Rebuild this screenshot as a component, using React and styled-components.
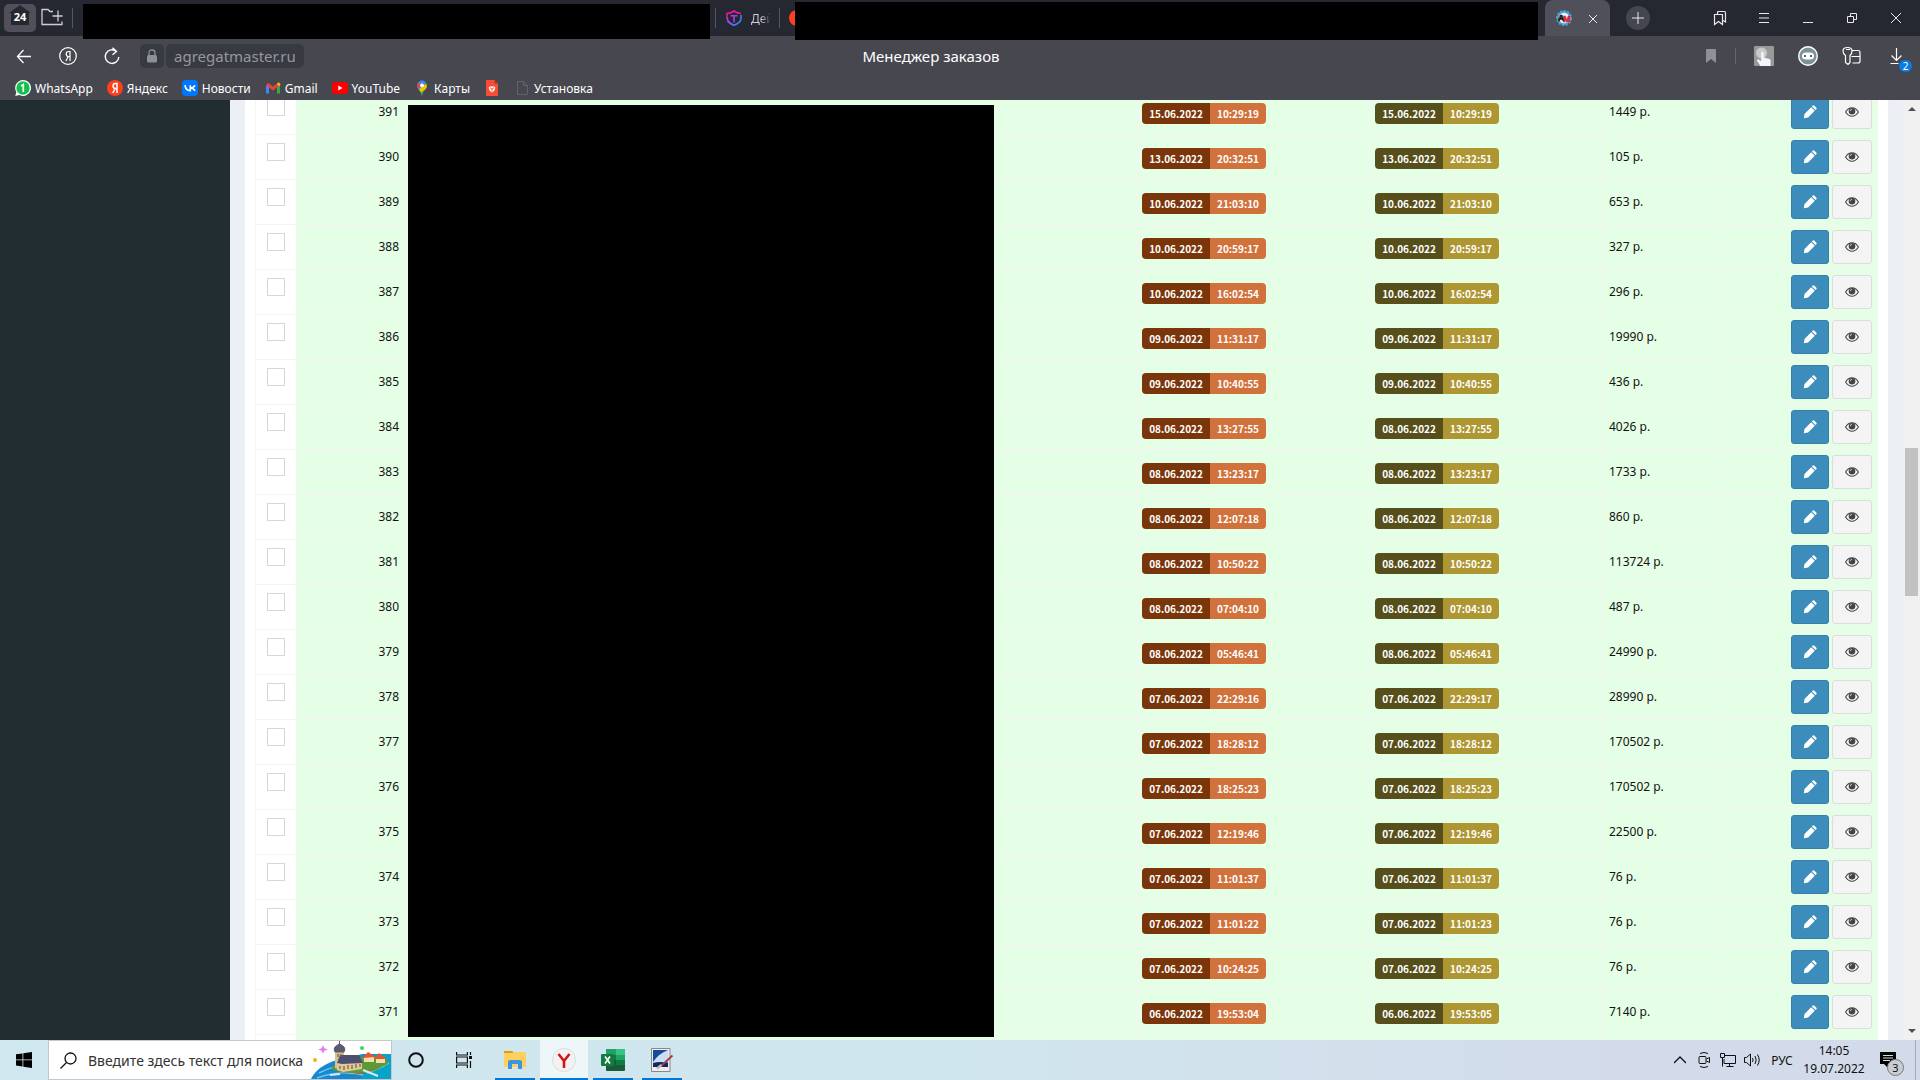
import React from 'react';
import styled, { createGlobalStyle } from 'styled-components';

const GlobalStyle = createGlobalStyle`
    * {
        box-sizing: border-box;
    }
    body {
        margin: 0;
        overflow: hidden;
        font-family: 'Noto Sans', sans-serif;
    }
    button {
        font: inherit;
        color: inherit;
        padding: 0;
        border: 0;
        background: none;
    }
`;

const Screen = styled.div`
    display: flex;
    flex-direction: column;
    height: 100vh;
`;

// browser: tab strip
const TabStrip = styled.div`
    display: flex;
    align-items: center;
    height: 36px;
    background: #252831;
    color: #e8e8ea;
`;

const HomeTab = styled.button`
    width: 32px;
    height: 28px;
    margin-left: 4px;
    border-radius: 5px;
    background: #50505a;
`;

const NewGroup = styled.button`
    width: 22px;
    height: 20px;
    margin: 0 9px 0 5px;
`;

const TabDivider = styled.span`
    flex: none;
    width: 1px;
    height: 20px;
    margin-right: ${({ $mr }) => $mr || 0}px;
    background: #555861;
`;

const Redacted = styled.div`
    position: relative;
    z-index: 1;
    align-self: flex-start;
    flex: ${({ $grow }) => $grow} 1 0;
    height: ${({ $h }) => $h}px;
    margin-top: ${({ $top }) => $top}px;
    background: #000;
`;

const MiniTabs = styled.div`
    display: flex;
    flex: none;
    align-items: center;
    width: 85px;
    padding-left: 5px;
    overflow: hidden;
`;

const MiniTab = styled.button`
    display: flex;
    flex: none;
    align-items: center;
    gap: 9px;
    width: 63px;
    padding-left: 10px;
    text-align: left;
    font-size: 12px;

    svg {
        flex: none;
    }
`;

const FadeText = styled.span`
    white-space: nowrap;
    color: transparent;
    background: linear-gradient(90deg, #d0d0d4 10px, #252831 20px);
    background-clip: text;
`;

const RedTab = styled.span`
    flex: none;
    width: 16px;
    height: 16px;
    margin-left: 9px;
    border-radius: 8px;
    background: #fc3f1d;
`;

const WindowSide = styled.div`
    display: flex;
    flex: none;
    align-items: center;
    width: 382px;
    height: 36px;
    padding-left: 7px;
`;

const ActiveTab = styled.div`
    display: flex;
    flex: none;
    align-items: center;
    gap: 16px;
    width: 65px;
    height: 36px;
    padding-left: 11px;
    border-radius: 8px 8px 0 0;
    background: #50505a;
`;

const PlusButton = styled.button`
    display: grid;
    flex: none;
    place-items: center;
    width: 24px;
    height: 24px;
    margin: 0 48px 0 16px;
    border-radius: 50%;
    background: #444650;
`;

const WindowButton = styled.button`
    display: grid;
    flex: none;
    place-items: center;
    width: 44px;
    height: 36px;
`;

// browser: address row
const AddressBar = styled.div`
    display: grid;
    grid-template-columns: 1fr auto 1fr 58px;
    align-items: center;
    height: 40px;
    background: #474750;
    color: #fff;
`;

const AddressLeft = styled.div`
    display: flex;
    align-items: center;
    padding-left: 12px;
`;

const NavButton = styled.button`
    display: grid;
    place-items: center;
    width: 24px;
    height: 24px;
    margin-right: 20px;
`;

const LockBox = styled.button`
    display: grid;
    place-items: center;
    width: 24px;
    height: 24px;
    margin: 0 2px 0 -4px;
    border-radius: 5px;
    background: #383a42;
`;

const Url = styled.button`
    height: 24px;
    padding: 0 8px;
    border-radius: 5px;
    background: #383a42;
    color: #96979c;
    font-size: 15px;
    line-height: 24px;
`;

const PageTitle = styled.div`
    font-size: 15px;
`;

const AddressRight = styled.div`
    display: flex;
    align-items: center;
    justify-content: flex-end;
`;

const ToolDivider = styled.span`
    width: 1px;
    height: 16px;
    margin-left: 14px;
    background: #666870;
`;

const ToolButton = styled.button`
    position: relative;
    display: grid;
    place-items: center;
    width: 20px;
    height: 24px;
    margin-left: ${({ $ml }) => $ml || 0}px;
`;

const Badge = styled.span`
    position: absolute;
    right: -6px;
    bottom: -4px;
    width: 13px;
    height: 12px;
    border-radius: 6px;
    background: #0a7be0;
    color: #fff;
    font-size: 10px;
    line-height: 12px;
    text-align: center;
`;

const Bookmarks = styled.nav`
    display: flex;
    align-items: center;
    gap: 14px;
    height: 24px;
    padding-left: 15px;
    background: #474750;
`;

const Bookmark = styled.a`
    display: flex;
    align-items: center;
    gap: 4px;
    color: #fff;
    font-size: 12px;
    text-decoration: none;
    white-space: nowrap;

    svg {
        flex: none;
    }
`;

// page
const Page = styled.div`
    flex: 1;
    display: flex;
    min-height: 0;
    background: #ecf0f5;
`;

const Sidebar = styled.aside`
    width: 230px;
    background: #222d32;
`;

const Content = styled.main`
    flex: 1;
    min-width: 0;
    padding: 0 15px;
    overflow: hidden;
`;

const Box = styled.div`
    height: 100%;
    padding: 0 10px;
    overflow: hidden;
    background: #fff;
`;

const TableWrap = styled.div`
    position: relative;
    margin-top: -11px;
`;

const Orders = styled.table`
    width: 100%;
    table-layout: fixed;
    border-collapse: collapse;
    font-size: 12px;
    line-height: 16px;
    color: #111;
`;

const Row = styled.tr`
    height: 45px;
`;

const Cell = styled.td`
    height: 45px;
    padding: 0 5px;
    border: 1px solid #f4f4f4;
    background: ${({ $plain }) => ($plain ? '#fff' : '#e5ffe6')};
    text-align: ${({ $align }) => $align || 'left'};
    vertical-align: middle;
`;

const Check = styled.input`
    display: block;
    appearance: none;
    width: 18px;
    height: 18px;
    margin: 0 0 10px 6px;
    border: 1px solid #d2d6de;
    background: #fff;
`;

const Stamp = styled.span`
    display: inline-flex;
    margin-top: 2px;
    border-radius: 4px;
    overflow: hidden;
    color: #fff;
    font-family: 'Noto Sans CJK SC', 'Noto Sans', sans-serif;
    font-size: 10px;
    font-weight: 700;
    line-height: 21px;
    vertical-align: middle;
`;

const StampDate = styled.span`
    width: 68px;
    text-align: center;
    background: ${({ $color }) => $color};
`;

const StampTime = styled.span`
    width: 56px;
    text-align: center;
    background: ${({ $color }) => $color};
`;

const Actions = styled.div`
    display: flex;
    justify-content: flex-end;
    gap: 3px;
`;

const ActionButton = styled.button`
    display: grid;
    place-items: center;
    width: ${({ $primary }) => ($primary ? 38 : 40)}px;
    height: 34px;
    border: 1px solid ${({ $primary }) => ($primary ? '#367fa9' : '#ddd')};
    border-radius: 3px;
    background: ${({ $primary }) => ($primary ? '#3c8dbc' : '#f4f4f4')};
`;

const TableCover = styled.div`
    position: absolute;
    top: 16px;
    bottom: 43px;
    left: 153px;
    right: 884px;
    background: #000;
`;

const Scrollbar = styled.div`
    display: flex;
    flex-direction: column;
    align-items: center;
    width: 17px;
    padding: 6px 0;
    background: #f0f0f0;
`;

const Thumb = styled.div`
    width: 13px;
    height: 148px;
    background: #c1c1c1;
`;

const Gap = styled.div`
    flex: ${({ $grow }) => $grow};
`;

// windows taskbar
const Taskbar = styled.footer`
    display: flex;
    height: 40px;
    background: linear-gradient(90deg, #cfe7ee, #d0e6ee 50%, #d3dbea 85%);
    color: #111;
`;

const StartButton = styled.button`
    display: grid;
    place-items: center;
    width: 48px;
`;

const Search = styled.label`
    display: flex;
    align-items: center;
    width: 344px;
    border: 1px solid #c4c8ca;
    background: #fff;
`;

const SearchIcon = styled.svg`
    flex: none;
    margin: 0 11px;
`;

const SearchInput = styled.input`
    flex: 1;
    min-width: 0;
    height: 36px;
    padding: 0;
    border: 0;
    outline: 0;
    background: none;
    font-family: 'Noto Sans', sans-serif;
    font-size: 14px;

    &::placeholder {
        color: #333;
        opacity: 1;
    }
`;

const TaskButton = styled.button`
    display: grid;
    place-items: center;
    width: 48px;
    height: 40px;
    background: ${({ $active }) => ($active ? '#edf6f9' : 'none')};
`;

const AppButton = styled(TaskButton)`
    width: ${({ $active }) => ($active ? 48 : 40)}px;
    margin-left: ${({ $ml }) => $ml || 0}px;
    padding-top: 2px;
    border-bottom: 2px solid #0078d7;
`;

const Tray = styled.div`
    display: flex;
    align-items: center;
    margin-left: auto;
`;

const TrayButton = styled.button`
    position: relative;
    display: grid;
    place-items: center;
    width: 24px;
    height: 40px;
`;

const Language = styled.button`
    width: 36px;
    font-size: 12px;
`;

const Clock = styled.time`
    width: 68px;
    font-size: 12px;
    line-height: 18px;
    text-align: center;
`;

const Notices = styled(TrayButton)`
    width: 48px;
    margin-right: 4px;
    padding-right: 8px;
    border-right: 1px solid #a5acb8;
`;

const NoticeCount = styled.span`
    position: absolute;
    right: 11px;
    bottom: 4px;
    width: 17px;
    height: 17px;
    border: 1px solid #777;
    border-radius: 50%;
    background: #c9cdd3;
    font-size: 11px;
    line-height: 15px;
`;

const orders = [
    [391, '15.06.2022', '10:29:19', '10:29:19', '1449'],
    [390, '13.06.2022', '20:32:51', '20:32:51', '105'],
    [389, '10.06.2022', '21:03:10', '21:03:10', '653'],
    [388, '10.06.2022', '20:59:17', '20:59:17', '327'],
    [387, '10.06.2022', '16:02:54', '16:02:54', '296'],
    [386, '09.06.2022', '11:31:17', '11:31:17', '19990'],
    [385, '09.06.2022', '10:40:55', '10:40:55', '436'],
    [384, '08.06.2022', '13:27:55', '13:27:55', '4026'],
    [383, '08.06.2022', '13:23:17', '13:23:17', '1733'],
    [382, '08.06.2022', '12:07:18', '12:07:18', '860'],
    [381, '08.06.2022', '10:50:22', '10:50:22', '113724'],
    [380, '08.06.2022', '07:04:10', '07:04:10', '487'],
    [379, '08.06.2022', '05:46:41', '05:46:41', '24990'],
    [378, '07.06.2022', '22:29:16', '22:29:17', '28990'],
    [377, '07.06.2022', '18:28:12', '18:28:12', '170502'],
    [376, '07.06.2022', '18:25:23', '18:25:23', '170502'],
    [375, '07.06.2022', '12:19:46', '12:19:46', '22500'],
    [374, '07.06.2022', '11:01:37', '11:01:37', '76'],
    [373, '07.06.2022', '11:01:22', '11:01:23', '76'],
    [372, '07.06.2022', '10:24:25', '10:24:25', '76'],
    [371, '06.06.2022', '19:53:04', '19:53:05', '7140'],
];

const Line = ({ size = 16, children, ...rest }) => (
    <svg width={size} height={size} viewBox={`0 0 ${size} ${size}`} fill="none" stroke="currentColor" {...rest}>
        {children}
    </svg>
);

const PencilIcon = () => (
    <svg width="14" height="14" viewBox="0 0 14 14" fill="#fff">
        <path d="M.8 13.2l.7-4.300L8.200 2.200l3.600 3.600L5.100 12.500zM8.900 1.500l.9-.9q.7-.6 1.400 0l2.200 2.200q.6.700 0 1.400l-.9.900z" />
    </svg>
);

const EyeIcon = () => (
    <svg width="14" height="10" viewBox="0 0 14 10">
        <path d="M.6 5Q3.200.8 7 .8T13.400 5Q10.800 9.200 7 9.200T.6 5z" fill="#f8f8f8" stroke="#444" strokeWidth="1.100" />
        <circle cx="7" cy="4.200" r="3.300" fill="#444" />
        <path d="M5.200 4.200q0-1.800 1.800-1.800" fill="none" stroke="#ddd" strokeWidth=".8" />
    </svg>
);

const bookmarks = [
    ['WhatsApp', (
        <svg width="16" height="16" viewBox="0 0 16 16">
            <path d="M8 0a8 8 0 1 1-3.700 15.100L.3 16l1-3.900A8 8 0 0 1 8 0z" fill="#fff" />
            <circle cx="8" cy="8" r="6.700" fill="#12c04b" />
            <path d="M6 6l2.300-1.500V12" fill="none" stroke="#fff" strokeWidth="1.700" />
        </svg>
    )],
    ['Яндекс', (
        <svg width="16" height="16" viewBox="0 0 16 16">
            <circle cx="8" cy="8" r="8" fill="#fc3f1d" />
            <path d="M10 13V3.500H8.400q-2.300 0-2.300 2.500T8.400 8.500H10M8.200 8.500L5.800 13" fill="none" stroke="#fff" strokeWidth="1.500" />
        </svg>
    )],
    ['Новости', (
        <svg width="16" height="16" viewBox="0 0 16 16">
            <rect width="16" height="16" rx="4" fill="#07f" />
            <path d="M3 5.200q.5 5.300 5.300 5.500V5.200M13 5.200Q12 7.500 8.500 8q3.300.3 4.500 2.800" fill="none" stroke="#fff" strokeWidth="1.600" />
        </svg>
    )],
    ['Gmail', (
        <svg width="16" height="16" viewBox="0 0 16 16" fill="none" strokeWidth="3">
            <path d="M2.500 13.500V5" stroke="#4285f4" />
            <path d="M13.500 13.500V5" stroke="#34a853" />
            <path d="M2 4l6 4.500L14 4" stroke="#ea4335" />
            <path d="M12.800 5l2-1.500" stroke="#fbbc04" />
        </svg>
    )],
    ['YouTube', (
        <svg width="16" height="16" viewBox="0 0 16 16">
            <rect y="2" width="16" height="12" rx="3" fill="#f00" />
            <path d="M6.300 5.500L10.500 8l-4.200 2.500z" fill="#fff" />
        </svg>
    )],
    ['Карты', (
        <svg width="16" height="16" viewBox="0 0 16 16">
            <path d="M8 16Q7.500 12 4.500 9.200 2 6 4 2.700L8 5.500z" fill="#34a853" />
            <path d="M8 16q.5-4 3.500-6.800Q14 6 12 2.700L4.500 9.200Q7 12 8 16z" fill="#34a853" />
            <path d="M3.500 7L8 5.500l4.500-1.500q1 3-1 5.200L7 12.500Q6 10.500 3.500 7z" fill="#fbbc04" />
            <path d="M4 2.700Q5.500.2 8 .2t4 2.500L5 9.500Q2 6 4 2.700z" fill="#4285f4" />
            <path d="M4 2.700L7 5.200 4 8.500Q2 5.500 4 2.700z" fill="#ea4335" />
            <circle cx="8" cy="5.300" r="1.900" fill="#fff" />
        </svg>
    )],
    ['', (
        <svg width="16" height="16" viewBox="0 0 16 16">
            <path d="M2 0h8.500L14 3.500V16H2z" fill="#f84c36" />
            <path d="M10.500 0L14 3.500h-3.500z" fill="#b9301f" />
            <path d="M4.800 7q3.200-1.300 6.400 0-.2 4-3.200 5.500Q5 11 4.800 7z" fill="#fff" />
            <path d="M8 11.500V9.200M6 7.600l2 1.600 2-1.600" fill="none" stroke="#f84c36" />
        </svg>
    )],
    ['Установка', (
        <Line>
            <path d="M3.500 1.500h6l4 4v9h-10zM9.500 1.500v4h4" stroke="#62626a" />
        </Line>
    )],
];

const Browser = () => (
    <header>
        <TabStrip>
            <HomeTab aria-label="24 вкладки">
                <svg width="24" height="22" viewBox="0 0 24 22">
                    <path d="M12 0l11 8h-2v12H3V8H1z" fill="#252831" />
                    <text x="12" y="16" fill="#fff" fontSize="11" fontWeight="700" textAnchor="middle">24</text>
                </svg>
            </HomeTab>
            <NewGroup aria-label="Новая группа">
                <svg width="22" height="20" viewBox="0 0 22 20" fill="none" stroke="#cfcfd3" strokeWidth="1.300">
                    <path d="M12 3.500H9l-2-2H1v15h20v-3M17 2.500v11M11.500 8h10" />
                </svg>
            </NewGroup>
            <TabDivider $mr={10} />
            <Redacted $grow={627} $top={4} $h={35} />
            <MiniTabs>
                <TabDivider />
                <MiniTab>
                    <Line strokeWidth="1.600">
                        <path d="M1 9V3.500Q4.500 3.500 8 1q3.500 2.500 7 2.500" stroke="#f0159a" />
                        <path d="M15 5v3.500q0 4-7 6.700-5-2-6.500-4.700" stroke="#3b83f7" />
                        <path d="M1.300 8q.3 4.500 4.700 6.300M4.500 5.800h7M8 6v6.500" stroke="#a83bf0" />
                    </Line>
                    <FadeText>Дей</FadeText>
                </MiniTab>
                <TabDivider />
                <RedTab />
            </MiniTabs>
            <Redacted $grow={743} $top={2} $h={38} />
            <WindowSide>
                <ActiveTab>
                    <svg width="16" height="16" viewBox="0 0 16 16">
                        <circle cx="8" cy="8" r="7" fill="#4aa5dc" stroke="#4aa5dc" strokeWidth="2" strokeDasharray="2 1.600" />
                        <circle cx="8" cy="8" r="5.200" fill="#eef3f6" />
                        <text x="2" y="11" fill="#111" stroke="#111" strokeWidth=".5" fontSize="9" fontWeight="700">A</text>
                        <text x="7" y="12" fill="#d1202b" stroke="#d1202b" strokeWidth=".5" fontSize="8" fontWeight="700">M</text>
                    </svg>
                    <button aria-label="Закрыть вкладку">
                        <Line size={10}><path d="M1 1l8 8M9 1L1 9" /></Line>
                    </button>
                </ActiveTab>
                <PlusButton aria-label="Новая вкладка">
                    <Line size={12}><path d="M6 0v12M0 6h12" /></Line>
                </PlusButton>
                <WindowButton aria-label="Коллекции">
                    <Line strokeWidth="1.200">
                        <path d="M2.500 4.500h8v10l-4-3-4 3zM5.500 4.500v-2q0-1 1-1h6q1 0 1 1v9.500l-2.500-1.500" />
                    </Line>
                </WindowButton>
                <WindowButton aria-label="Меню">
                    <Line size={10}><path d="M0 .5h10M0 5h10M0 9.500h10" /></Line>
                </WindowButton>
                <WindowButton aria-label="Свернуть">
                    <Line size={10}><path d="M0 9.500h10" /></Line>
                </WindowButton>
                <WindowButton aria-label="Развернуть">
                    <Line size={10}><path d="M.5 3.500h6v6h-6zM3.500 3.500v-3h6v6h-3" /></Line>
                </WindowButton>
                <WindowButton aria-label="Закрыть">
                    <Line size={10}><path d="M0 0l10 10M10 0L0 10" /></Line>
                </WindowButton>
            </WindowSide>
        </TabStrip>
        <AddressBar>
            <AddressLeft>
                <NavButton aria-label="Назад">
                    <Line strokeWidth="1.300"><path d="M15 8.500H1.500M7.500 2L1.500 8.500l6 6.500" /></Line>
                </NavButton>
                <NavButton aria-label="Яндекс">
                    <Line size={18} strokeWidth="1.200">
                        <circle cx="9" cy="9" r="8.300" />
                        <path d="M11 14V4.500H9.500q-2.300 0-2.300 2.500t2.300 2.500H11M9.300 9.500L6.800 14" />
                    </Line>
                </NavButton>
                <NavButton aria-label="Обновить">
                    <Line size={18} strokeWidth="1.400">
                        <path d="M13.500 4.500A6.800 6.800 0 1 0 15.800 10M9.500.8l4 3.700-4 3.200" />
                    </Line>
                </NavButton>
                <LockBox aria-label="Защищённое соединение">
                    <svg width="12" height="14" viewBox="0 0 12 14">
                        <path d="M3 7V3.500q0-2.500 3-2.500t3 2.500V7" fill="none" stroke="#8d9097" strokeWidth="1.300" />
                        <rect x="1" y="6" width="10" height="7.500" rx="1.500" fill="#8d9097" />
                    </svg>
                </LockBox>
                <Url>agregatmaster.ru</Url>
            </AddressLeft>
            <PageTitle>Менеджер заказов</PageTitle>
            <AddressRight>
                <ToolButton aria-label="В закладки">
                    <svg width="10" height="14" viewBox="0 0 10 14">
                        <path d="M0 1q0-1 1-1h8q1 0 1 1v13l-5-4-5 4z" fill="#909095" />
                    </svg>
                </ToolButton>
                <ToolDivider />
                <ToolButton $ml={18} aria-label="Кликер">
                    <svg width="20" height="20" viewBox="0 0 20 20">
                        <rect width="20" height="20" rx="1" fill="#999" />
                        <circle cx="7.500" cy="7" r="5.500" fill="#c9c9c9" />
                        <path d="M7.200 7q0-1.300 1.300-1.300T9.800 7v4.800l5 1q1.800.5 1.800 2.200v5H6.500L3 14.800q-.3-1.800 1.800-1.300l2.400 1.500z" fill="#f1f5fb" />
                    </svg>
                </ToolButton>
                <ToolButton $ml={24} aria-label="Робот">
                    <svg width="20" height="20" viewBox="0 0 20 20">
                        <circle cx="10" cy="10" r="9.300" fill="#7d9196" stroke="#fff" strokeWidth="1.400" />
                        <rect x="4" y="6.500" width="12" height="7" rx="3.500" fill="#fff" />
                        <path d="M7 9v2M13 9v2" stroke="#48545a" strokeWidth="1.800" />
                    </svg>
                </ToolButton>
                <ToolButton $ml={24} aria-label="Пароли">
                    <Line size={20} strokeWidth="1.200">
                        <path d="M3.500 9.500Q1 8 1 5q0-3.500 4.500-3.500T10 5q0 3-2 4.500v7l-2 2-2.500-2zM4 3.500h4" />
                        <path d="M10 4.500h6q2 0 2 2v8.500q0 2-2 2h-5.500M9.500 10.500H18" />
                    </Line>
                </ToolButton>
            </AddressRight>
            <ToolButton $ml={24} aria-label="Загрузки">
                <Line strokeWidth="1.200"><path d="M8.500 0v12M3.500 7.500l5 5 5-5M2.500 15.500h8" /></Line>
                <Badge>2</Badge>
            </ToolButton>
        </AddressBar>
        <Bookmarks>
            {bookmarks.map(([name, icon]) => (
                <Bookmark key={name} href="#" aria-label={name || 'Закладка'}>
                    {icon}
                    {name}
                </Bookmark>
            ))}
        </Bookmarks>
    </header>
);

const OrderRow = ({ order }) => {
    const [id, date, created, changed, sum] = order;
    return (
        <Row>
            <Cell $plain>
                <Check type="checkbox" aria-label={`Заказ ${id}`} />
            </Cell>
            <Cell $align="right">{id}</Cell>
            <Cell />
            <Cell>
                <Stamp>
                    <StampDate $color="#7a350a">{date}</StampDate>
                    <StampTime $color="#d1723d">{created}</StampTime>
                </Stamp>
            </Cell>
            <Cell>
                <Stamp>
                    <StampDate $color="#564f1b">{date}</StampDate>
                    <StampTime $color="#ae9633">{changed}</StampTime>
                </Stamp>
            </Cell>
            <Cell>{sum} р.</Cell>
            <Cell>
                <Actions>
                    <ActionButton $primary aria-label="Редактировать"><PencilIcon /></ActionButton>
                    <ActionButton aria-label="Просмотр"><EyeIcon /></ActionButton>
                </Actions>
            </Cell>
        </Row>
    );
};

const OrdersPage = () => (
    <Page>
        <Sidebar />
        <Content>
            <Box>
                <TableWrap>
                    <Orders>
                        <colgroup>
                            <col width="41" />
                            <col width="108" />
                            <col />
                            <col width="233" />
                            <col width="234" />
                            <col width="114" />
                            <col width="160" />
                        </colgroup>
                        <tbody>
                            {orders.map((order) => <OrderRow key={order[0]} order={order} />)}
                            <Row>
                                <Cell $plain /><Cell /><Cell /><Cell /><Cell /><Cell /><Cell />
                            </Row>
                        </tbody>
                    </Orders>
                    <TableCover />
                </TableWrap>
            </Box>
        </Content>
        <Scrollbar>
            <svg width="8" height="5" viewBox="0 0 8 5"><path d="M0 5l4-4 4 4z" fill="#505050" /></svg>
            <Gap $grow={337} />
            <Thumb />
            <Gap $grow={432} />
            <svg width="8" height="5" viewBox="0 0 8 5"><path d="M0 0l4 4 4-4z" fill="#505050" /></svg>
        </Scrollbar>
    </Page>
);

const Island = () => (
    <svg width="80" height="38" viewBox="0 0 80 38">
        <path d="M0 38Q6 25 26 19q14-4 26-6h28v25z" fill="#1787d0" />
        <path d="M50 38q6-16 14-25h16v25z" fill="#08a3c9" />
        <path d="M8 32q14-7 20-6M6 37q22-8 46-3M56 32q12-4 22-10" fill="none" stroke="#6cc6ec" strokeWidth="1.500" />
        <path d="M20 28q5-8 22-11t34 2q4 4-4 6-8 7-26 7t-26-4z" fill="#5b9b32" />
        <path d="M22 30q14 5 26 2l24-7-22 8q-16 2-28-3z" fill="#9a6e35" />
        <path d="M24 11h9v19l-9-3z" fill="#d9c08f" />
        <path d="M26 20h25v8l-19 3-6-2z" fill="#e3c99a" />
        <path d="M26 22l3-8h19l4 8-21 1z" fill="#4d4f72" />
        <path d="M28.500 0v4M24 11q-3-5 4.500-8 7.500 3 4.500 8z" fill="#5b5b70" stroke="#5b5b70" />
        <path d="M29 25v3M33 25v4M37 24v4M41 24v4M45 23v4M49 23v3M27 13v3M30 13v3" stroke="#7d6544" strokeWidth="1.300" />
        <path d="M53 16h10v5H53zM65 17h9v5h-9z" fill="#f6dcb3" />
        <path d="M51 17l6-6 8 5zM63 18l5-6 8 6z" fill="#e0582b" />
        <path d="M52 29l15 6M19 34l10-1" stroke="#d4ecf5" strokeWidth="2" />
        <path d="M12 4l1.300 3.200L17 8.500l-3.700 1.300L12 13l-1.300-3.200L7 8.500l3.700-1.300z" fill="#e07cf5" />
        <circle cx="4" cy="19" r="2" fill="#f9ab1f" />
        <circle cx="51" cy="7" r="2" fill="#3fd179" />
    </svg>
);

const WindowsBar = () => (
    <Taskbar>
        <StartButton aria-label="Пуск">
            <svg width="16" height="16" viewBox="0 0 16 16">
                <path d="M0 2.300l6.500-.9v6.100H0zM7.300 1.300L16 0v7.500H7.300zM0 8.300h6.500v6.200L0 13.600zM7.300 8.300H16V16l-8.700-1.300z" fill="#000" />
            </svg>
        </StartButton>
        <Search>
            <SearchIcon width="17" height="17" viewBox="0 0 17 17" fill="none" stroke="#111" strokeWidth="1.300">
                <circle cx="10.500" cy="6.500" r="5.500" />
                <path d="M6.500 10.500L.5 16.500" />
            </SearchIcon>
            <SearchInput aria-label="Поиск" placeholder="Введите здесь текст для поиска" />
            <Island />
        </Search>
        <TaskButton aria-label="Кортана">
            <Line strokeWidth="2"><circle cx="8" cy="8" r="6.800" /></Line>
        </TaskButton>
        <TaskButton aria-label="Представление задач">
            <Line strokeWidth="1.200">
                <path d="M.6 0v3h10.800V0M.6 5h10.800v6H.6zM.6 16v-3h10.800v3M14.500 0v3M14.500 9v7" />
                <path d="M13 4h3v3h-3z" fill="currentColor" stroke="none" />
            </Line>
        </TaskButton>
        <AppButton $ml={7} aria-label="Проводник">
            <svg width="22" height="20" viewBox="0 0 22 20">
                <path d="M0 1h8l2 2H0z" fill="#e09c11" />
                <path d="M0 3h9l2-1h11v15H0z" fill="#ffd15c" />
                <path d="M4 19v-7q0-2 2-2h10q2 0 2 2v7h-4v-5H8v5z" fill="#3c96df" />
            </svg>
        </AppButton>
        <AppButton $ml={5} $active aria-label="Яндекс Браузер">
            <svg width="24" height="24" viewBox="0 0 24 24">
                <circle cx="12" cy="12" r="11.500" fill="#f2f2f2" stroke="#ddd" />
                <path d="M6.500 6l5.500 7 5.500-7M12 12.500V20" fill="none" stroke="#d8121b" strokeWidth="2.600" />
            </svg>
        </AppButton>
        <AppButton $ml={5} aria-label="Excel">
            <svg width="24" height="22" viewBox="0 0 24 22">
                <rect x="5" width="19" height="22" rx="1" fill="#185c37" />
                <path d="M5 0h10v11H5z" fill="#21a366" />
                <path d="M15 0h9v6h-9z" fill="#33c481" />
                <path d="M15 6h9v5h-9z" fill="#21a366" />
                <path d="M5 6h10v5H5zM15 11h9v5h-9z" fill="#107c41" />
                <rect y="5" width="13" height="12" rx="1" fill="#107c41" />
                <path d="M4 7.500l5 7M9 7.500l-5 7" stroke="#fff" strokeWidth="1.700" />
            </svg>
        </AppButton>
        <AppButton $ml={9} aria-label="Графический редактор">
            <svg width="23" height="24" viewBox="0 0 23 24">
                <path d="M.5.500h18.500v23H.5z" fill="#eee" stroke="#888" />
                <path d="M2 2h15v14H2z" fill="#174a9c" />
                <path d="M2 14Q7 6 17 2v12q-6 3-15 2z" fill="#c7def5" />
                <path d="M2 15q7-2 15 0v4H2z" fill="#102a5e" />
                <path d="M21.500 7.500L10 18" stroke="#a83a45" strokeWidth="1.800" />
                <path d="M10.500 17L6 20.500" stroke="#bbb" strokeWidth="2.500" />
            </svg>
        </AppButton>
        <Tray>
            <TrayButton aria-label="Скрытые значки">
                <Line size={12} strokeWidth="1.400"><path d="M0 9l6-6 6 6" /></Line>
            </TrayButton>
            <TrayButton aria-label="Камера">
                <Line><rect x="3" y="4.500" width="7" height="7" rx="1" /><path d="M10.500 7l3-1.500v5l-3-1.500M4 1.500q4-2 8 0M4 14.500q4 2 8 0" /></Line>
            </TrayButton>
            <TrayButton aria-label="Сеть">
                <Line><path d="M5 3.500h10.500v8H4V7M9.500 11.500v3M6.500 14.500h7M.5 1.500h4v4h-4zM2.500 5.500v9" /></Line>
            </TrayButton>
            <TrayButton aria-label="Громкость">
                <Line><path d="M.5 5.500h2L6.500 2v12l-4-3.500h-2zM8.500 6q1.200 2 0 4M11 4q2.400 4 0 8M13.500 2.500q3.400 5.500 0 11" /></Line>
            </TrayButton>
            <Language>РУС</Language>
            <Clock>14:05<br />19.07.2022</Clock>
            <Notices aria-label="Уведомления">
                <svg width="16" height="16" viewBox="0 0 16 16">
                    <path d="M0 0h16v12H8v4l-4-4H0z" fill="#000" />
                    <path d="M3 3.500h10M3 6h10M3 8.500h7" stroke="#d3dbea" />
                </svg>
                <NoticeCount>3</NoticeCount>
            </Notices>
        </Tray>
    </Taskbar>
);

const App = () => (
    <Screen>
        <GlobalStyle />
        <Browser />
        <OrdersPage />
        <WindowsBar />
    </Screen>
);

export default App;
